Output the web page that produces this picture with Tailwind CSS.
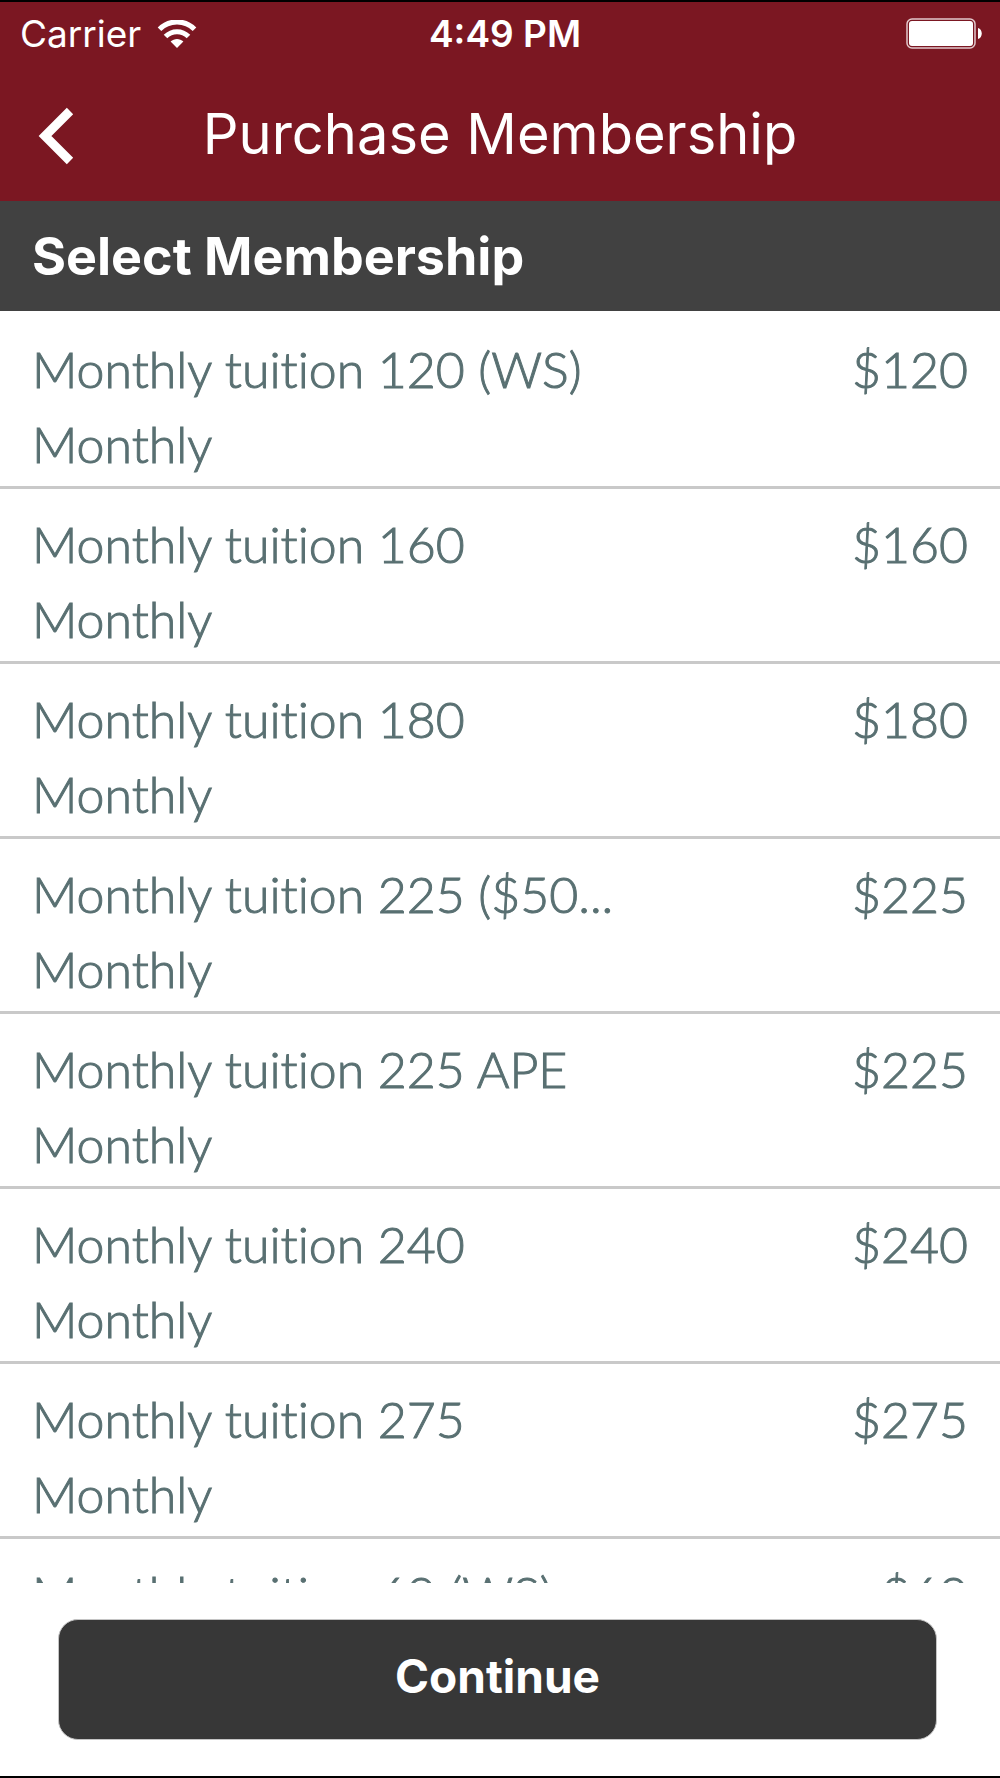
<!DOCTYPE html>
<html lang="en">
<head>
  <meta charset="UTF-8" />
  <meta name="viewport" content="width=device-width, initial-scale=1.0" />
  <title>Purchase Membership</title>
  <script src="https://cdn.jsdelivr.net/npm/@tailwindcss/browser@4"></script>
</head>
<body class="h-screen flex flex-col border-y-2 border-black bg-white font-['Inter',sans-serif] text-white">

  <header class="bg-[#7b1722]">
    <!-- Status bar -->
    <div class="h-16 pl-5 pr-[18px] grid grid-cols-3 items-center text-[37px]">
      <div class="flex items-center gap-4">
        <span>Carrier</span>
        <svg class="w-10 h-7" viewBox="0 0 40 28" fill="none" stroke="#fff" stroke-width="5">
          <path d="M2.500 9.200C12 -0.500 28 -0.500 37.500 9.200" />
          <path d="M8.500 16.500C15 10 25 10 31.500 16.500" />
          <path d="M13.600 21.600C17.300 18.200 22.700 18.200 26.400 21.600L20 28Z" fill="#fff" stroke="none" />
        </svg>
      </div>
      <time class="pl-2 text-center font-semibold">4:49 PM</time>
      <svg class="w-20 h-8 justify-self-end" viewBox="0 0 80 32">
        <rect x="5" y="1" width="68" height="29" rx="5" fill="none" stroke="#e2c8cb" stroke-width="1.500" />
        <rect x="7" y="3" width="64" height="25" rx="3" fill="#fff" />
        <path d="M76 10c5 1 5 10 0 11z" fill="#fff" />
      </svg>
    </div>

    <!-- Navigation bar -->
    <div class="h-[135px] px-9 pt-1 grid grid-cols-[1fr_auto_1fr] items-center">
      <button type="button" aria-label="Back" class="w-10">
        <svg class="w-10 h-15" viewBox="0 0 40 60" fill="none" stroke="#fff" stroke-width="9">
          <path d="M34 5L9 30L34 55" />
        </svg>
      </button>
      <h1 class="pb-1 text-[56px] leading-none">Purchase Membership</h1>
    </div>
  </header>

  <h2 class="h-[110px] px-8 pt-[2px] flex items-center bg-[#414141] text-[52px] font-bold">Select Membership</h2>

  <!-- Memberships -->
  <ul class="flex-1 min-h-0 overflow-hidden pt-[3px] font-['Lato',sans-serif] font-light text-[50px] leading-[75px] text-[#597072] [font-variant-ligatures:none] [-webkit-text-stroke:1px_#597072]">
    <li class="border-b-3 border-[#c9c9c9]">
      <button type="button" class="w-full px-8 pt-[18px] pb-1 flex justify-between items-start text-left">
        <span>Monthly tuition 120 (WS)<br />Monthly</span>
        <span>$120</span>
      </button>
    </li>
    <li class="border-b-3 border-[#c9c9c9]">
      <button type="button" class="w-full px-8 pt-[18px] pb-1 flex justify-between items-start text-left">
        <span>Monthly tuition 160<br />Monthly</span>
        <span>$160</span>
      </button>
    </li>
    <li class="border-b-3 border-[#c9c9c9]">
      <button type="button" class="w-full px-8 pt-[18px] pb-1 flex justify-between items-start text-left">
        <span>Monthly tuition 180<br />Monthly</span>
        <span>$180</span>
      </button>
    </li>
    <li class="border-b-3 border-[#c9c9c9]">
      <button type="button" class="w-full px-8 pt-[18px] pb-1 flex justify-between items-start text-left">
        <span>Monthly tuition 225 ($50...<br />Monthly</span>
        <span>$225</span>
      </button>
    </li>
    <li class="border-b-3 border-[#c9c9c9]">
      <button type="button" class="w-full px-8 pt-[18px] pb-1 flex justify-between items-start text-left">
        <span>Monthly tuition 225 APE<br />Monthly</span>
        <span>$225</span>
      </button>
    </li>
    <li class="border-b-3 border-[#c9c9c9]">
      <button type="button" class="w-full px-8 pt-[18px] pb-1 flex justify-between items-start text-left">
        <span>Monthly tuition 240<br />Monthly</span>
        <span>$240</span>
      </button>
    </li>
    <li class="border-b-3 border-[#c9c9c9]">
      <button type="button" class="w-full px-8 pt-[18px] pb-1 flex justify-between items-start text-left">
        <span>Monthly tuition 275<br />Monthly</span>
        <span>$275</span>
      </button>
    </li>
    <li class="border-b-3 border-[#c9c9c9]">
      <button type="button" class="w-full px-8 pt-[18px] pb-1 flex justify-between items-start text-left">
        <span>Monthly tuition 60 (WS)<br />Monthly</span>
        <span>$60</span>
      </button>
    </li>
  </ul>

  <footer class="pt-9 pb-9 pl-[58px] pr-[63px]">
    <button type="button" class="w-full h-[121px] pb-[6px] rounded-[20px] border border-[#c4c4c4] bg-[#373737] text-[46px] font-bold">Continue</button>
  </footer>

</body>
</html>
